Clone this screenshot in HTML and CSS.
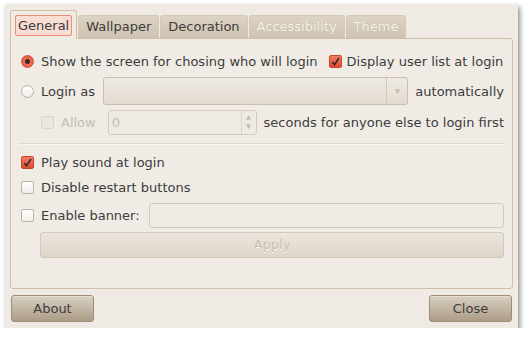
FILE: index.html
```html
<!DOCTYPE html>
<html lang="en">
<head>
  <meta charset="UTF-8" />
  <title>Login Window Preferences</title>
  <link rel="stylesheet" href="styles.css">
</head>
<body>
  <div class="window">
    <div class="tabs">
      <div class="tab active"><span class="focus">General</span></div>
      <div class="tab">Wallpaper</div>
      <div class="tab">Decoration</div>
      <div class="tab disabled">Accessibility</div>
      <div class="tab disabled">Theme</div>
    </div>

    <div class="notebook">
      <div class="row row-first">
        <span class="radio checked"></span>
        <span class="label">Show the screen for chosing who will login</span>
        <span class="check checked small-gap"><svg viewBox="0 0 12 12"><path d="M2.5 6.5 L5 9.5 L9.8 2.2" /></svg></span>
        <span class="label tight">Display user list at login</span>
      </div>

      <div class="row row-login">
        <span class="radio"></span>
        <span class="label">Login as</span>
        <div class="combo">
          <span class="combo-arrow"><svg viewBox="0 0 8 8"><path d="M1 1.5 L7 1.5 L4 7 Z" /></svg></span>
        </div>
        <span class="label">automatically</span>
      </div>

      <div class="row row-allow">
        <span class="check disabled-box"></span>
        <span class="label dim">Allow</span>
        <div class="spin">
          <span class="spin-value">0</span>
          <span class="spin-btns">
            <svg viewBox="0 0 8 8"><path d="M1 6.5 L7 6.5 L4 1 Z" /></svg>
            <svg viewBox="0 0 8 8"><path d="M1 1.5 L7 1.5 L4 7 Z" /></svg>
          </span>
        </div>
        <span class="label">seconds for anyone else to login first</span>
      </div>

      <div class="separator"></div>

      <div class="row row-opt">
        <span class="check checked"><svg viewBox="0 0 12 12"><path d="M2.5 6.5 L5 9.5 L9.8 2.2" /></svg></span>
        <span class="label">Play sound at login</span>
      </div>
      <div class="row row-opt">
        <span class="check"></span>
        <span class="label">Disable restart buttons</span>
      </div>
      <div class="row row-banner">
        <span class="check"></span>
        <span class="label">Enable banner:</span>
        <div class="entry"></div>
      </div>

      <div class="apply">Apply</div>
    </div>

    <div class="actions">
      <button class="btn">About</button>
      <button class="btn">Close</button>
    </div>
  </div>
</body>
</html>
```

FILE: styles.css
```css
* {
  box-sizing: border-box;
  margin: 0;
  padding: 0;
}

body {
  background: #fff;
  font-family: 'DejaVu Sans', 'Noto Sans', sans-serif;
  font-size: 13px;
  color: #3c3c3c;
}

.window {
  width: 513px;
  height: 324px;
  margin: 4px 0 0 5px;
  padding: 6px 5px 0;
  background: #efebe4;
  box-shadow: 2px 3px 5px rgba(0,0,0,0.45);
}

/* tabs */
.tabs {
  display: flex;
  align-items: flex-end;
  height: 28px;
  gap: 1px;
  position: relative;
  z-index: 1;
}

.tab {
  height: 23px;
  padding: 0 7px;
  line-height: 22px;
  border: 1px solid #d5c9b6;
  border-bottom: none;
  border-radius: 3px 3px 0 0;
  background: linear-gradient(#dcd3c4, #cfc3b0);
  color: #3c3c3c;
}

.tab.active {
  height: 29px;
  padding: 4px 4px 0;
  background: #f0ece5;
  border-color: #cdbfa9;
  margin-bottom: -1px;
}

.tab.disabled {
  color: #f6f2ec;
  text-shadow: 0 0 1px #b8aa95;
}

.focus {
  display: block;
  height: 21px;
  line-height: 19px;
  padding: 0 2px;
  border: 1px solid #f08a70;
  border-radius: 2px;
  background: #f7ddd2;
}

/* notebook page */
.notebook {
  height: 251px;
  border: 1px solid #cdbfa9;
  border-radius: 0 3px 3px 3px;
  background: #f0ece5;
  padding: 9px 8px 0 10px;
}

.row {
  display: flex;
  align-items: center;
  gap: 7px;
}

.row-first { height: 26px; }
.row-login { height: 32px; margin-top: 1px; }
.row-allow { height: 28px; padding-left: 20px; margin-top: 1px; }
.row-opt { height: 25px; }
.row-banner { height: 28px; margin-top: 1px; }

.label {
  white-space: nowrap;
}

.label.tight {
  margin-left: -2px;
}

.label.dim {
  color: #c4bcae;
}

.radio {
  width: 13px;
  height: 13px;
  flex: none;
  border-radius: 50%;
  border: 1px solid #bcb3a5;
  background: linear-gradient(#ffffff, #f1eee9);
}

.radio.checked {
  border-color: #d0513c;
  background: radial-gradient(circle, #3a2a28 0 2.2px, #f06e55 2.8px, #e04b33 100%);
}

.check {
  width: 13px;
  height: 13px;
  flex: none;
  border: 1px solid #bcb3a5;
  border-radius: 2px;
  background: linear-gradient(#ffffff, #f1eee9);
  display: flex;
}

.check.checked {
  border-color: #c9452f;
  background: linear-gradient(#f37e66, #dd4a30);
}

.check svg {
  width: 11px;
  height: 11px;
  fill: none;
  stroke: #2e2320;
  stroke-width: 1.6;
}

.check.disabled-box {
  border-color: #ddd6cb;
  background: #ebe6de;
}

.small-gap {
  margin-left: 4px;
}

.combo {
  width: 307px;
  height: 28px;
  margin-left: 1px;
  border: 1px solid #cbbfae;
  border-radius: 3px;
  background: linear-gradient(#efeae3, #e2dbd0);
  display: flex;
  justify-content: flex-end;
}

.combo-arrow {
  width: 21px;
  border-left: 1px solid #d3c9bb;
  display: flex;
  align-items: center;
  justify-content: center;
}

.combo-arrow svg,
.spin-btns svg {
  width: 7px;
  height: 7px;
  fill: #c5bdb0;
}

.spin {
  width: 151px;
  height: 25px;
  margin-left: 5px;
  border: 1px solid #d6ccbd;
  border-radius: 3px;
  background: #efebe4;
  display: flex;
  justify-content: space-between;
}

.spin-value {
  color: #c4bcae;
  padding-left: 3px;
  line-height: 23px;
}

.spin-btns {
  width: 15px;
  border-left: 1px solid #ddd4c7;
  display: flex;
  flex-direction: column;
  align-items: center;
  justify-content: space-around;
  padding: 2px 0;
}

.separator {
  height: 2px;
  margin: 7px 0 5px -2px;
  border-top: 1px solid #e0d8cb;
  border-bottom: 1px solid #f8f6f2;
}

.entry {
  flex: 1;
  height: 25px;
  margin-left: 2px;
  border: 1px solid #d6ccbd;
  border-radius: 3px;
  background: #f0ece5;
}

.apply {
  margin: 3px 0 0 19px;
  height: 26px;
  line-height: 24px;
  text-align: center;
  border: 1px solid #d4c8b6;
  border-radius: 3px;
  background: linear-gradient(#ebe6de, #ddd5c9);
  color: #c6bdb0;
  text-shadow: 0 1px 0 #fbf9f6;
}

/* bottom buttons */
.actions {
  display: flex;
  justify-content: space-between;
  padding: 6px 1px 0 1px;
}

.btn {
  width: 83px;
  height: 27px;
  font-family: inherit;
  font-size: 13px;
  color: #3c3c3c;
  border: 1px solid #9c8e7a;
  border-radius: 3px;
  background: linear-gradient(#d9d0c3, #ab9c86);
  box-shadow: inset 0 1px 0 rgba(255,255,255,0.35);
}
```
